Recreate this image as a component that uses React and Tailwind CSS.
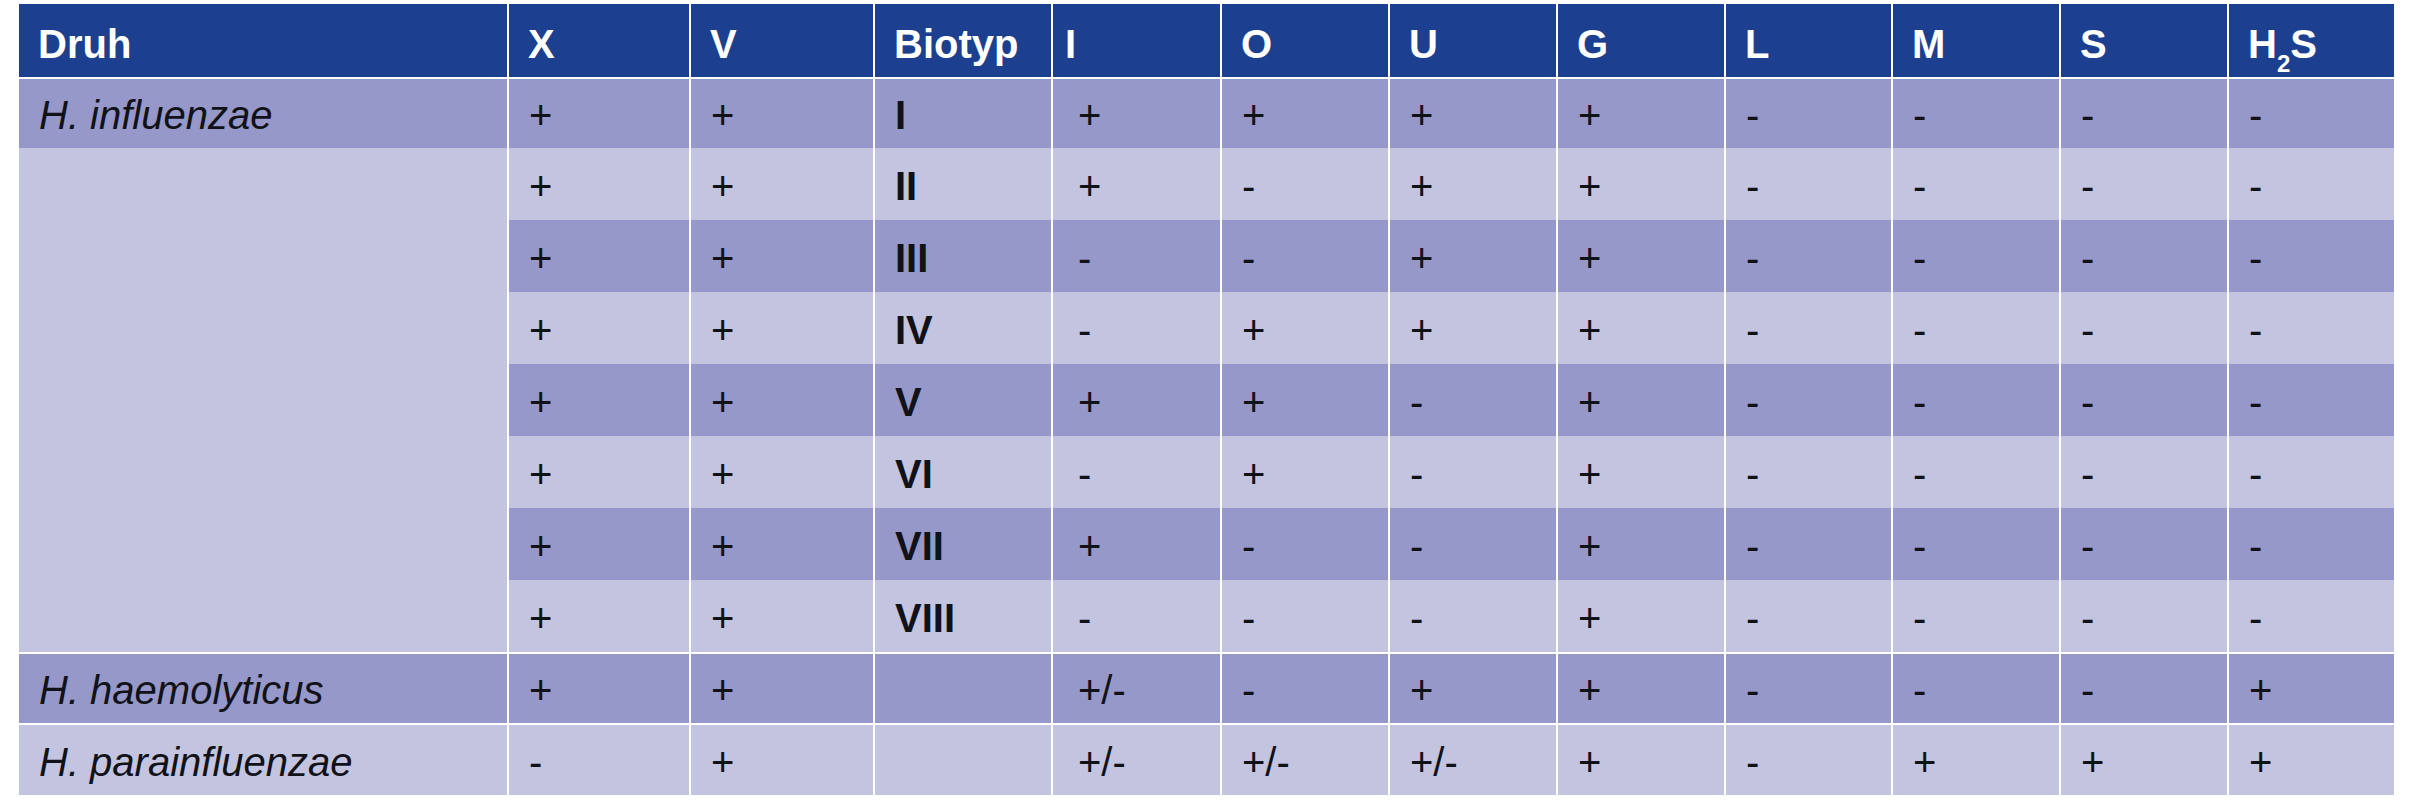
import React from 'react';

const DARK = 'bg-[#9598c8]';
const LIGHT = 'bg-[#c2c4e0]';

const headers = ['Druh', 'X', 'V', 'Biotyp', 'I', 'O', 'U', 'G', 'L', 'M', 'S', 'H2S'];

// riadky biotypov H. influenzae (bez stĺpca Druh)
const influenzae = [
    ['+', '+', 'I', '+', '+', '+', '+', '-', '-', '-', '-'],
    ['+', '+', 'II', '+', '-', '+', '+', '-', '-', '-', '-'],
    ['+', '+', 'III', '-', '-', '+', '+', '-', '-', '-', '-'],
    ['+', '+', 'IV', '-', '+', '+', '+', '-', '-', '-', '-'],
    ['+', '+', 'V', '+', '+', '-', '+', '-', '-', '-', '-'],
    ['+', '+', 'VI', '-', '+', '-', '+', '-', '-', '-', '-'],
    ['+', '+', 'VII', '+', '-', '-', '+', '-', '-', '-', '-'],
    ['+', '+', 'VIII', '-', '-', '-', '+', '-', '-', '-', '-'],
];

const others = [
    { name: 'H. haemolyticus', bg: DARK, values: ['+', '+', '', '+/-', '-', '+', '+', '-', '-', '-', '+'] },
    { name: 'H. parainfluenzae', bg: LIGHT, values: ['-', '+', '', '+/-', '+/-', '+/-', '+', '-', '+', '+', '+'] },
];

const Cell = ({ children, bg, top, bold, italic, col }) => (
    <div
        className={[
            'flex items-center pt-[3px] text-[40px] leading-none text-[#111118]',
            col === 4 ? 'pl-[25px]' : 'pl-[20px]',
            bg,
            top ? 'border-t-2 border-white' : '',
            bold ? 'font-bold' : '',
            italic ? 'italic' : '',
        ].join(' ')}
    >
        {children}
    </div>
);

const App = () => {
    return (
        <div className="min-h-[800px] bg-white pt-[4px] pl-[19px] font-['Liberation_Sans',Arial,sans-serif]">
            <div className="grid w-[2375px] grid-cols-[488px_180px_182px_176px_167px_166px_166px_166px_165px_166px_166px_165px] grid-rows-[73px_71px_72px_72px_72px_72px_72px_72px_72px_71px_72px] gap-x-[2px] bg-white">
                {headers.map((h, i) => (
                    <div
                        key={h}
                        className={
                            'flex items-center bg-[#1c3f8f] pt-[7px] text-[40px] font-bold leading-none text-white ' +
                            (i === 4 ? 'pl-[12px]' : 'pl-[19px]')
                        }
                    >
                        {h === 'H2S' ? (
                            <span>
                                H<sub className="bottom-[-14px] text-[24px]">2</sub>S
                            </span>
                        ) : (
                            h
                        )}
                    </div>
                ))}

                {influenzae.map((row, r) => {
                    const bg = r % 2 === 0 ? DARK : LIGHT;
                    return (
                        <React.Fragment key={r}>
                            {r === 0 && (
                                <Cell bg={bg} top italic>
                                    H. influenzae
                                </Cell>
                            )}
                            {r === 1 && <div className={'row-span-7 ' + LIGHT} />}
                            {row.map((v, c) => (
                                <Cell key={c} bg={bg} top={r === 0} bold={c === 2} col={c + 1}>
                                    {v}
                                </Cell>
                            ))}
                        </React.Fragment>
                    );
                })}

                {others.map((o) => (
                    <React.Fragment key={o.name}>
                        <Cell bg={o.bg} top italic>
                            {o.name}
                        </Cell>
                        {o.values.map((v, c) => (
                            <Cell key={c} bg={o.bg} top col={c + 1}>
                                {v}
                            </Cell>
                        ))}
                    </React.Fragment>
                ))}
            </div>
        </div>
    );
};

export default App;
